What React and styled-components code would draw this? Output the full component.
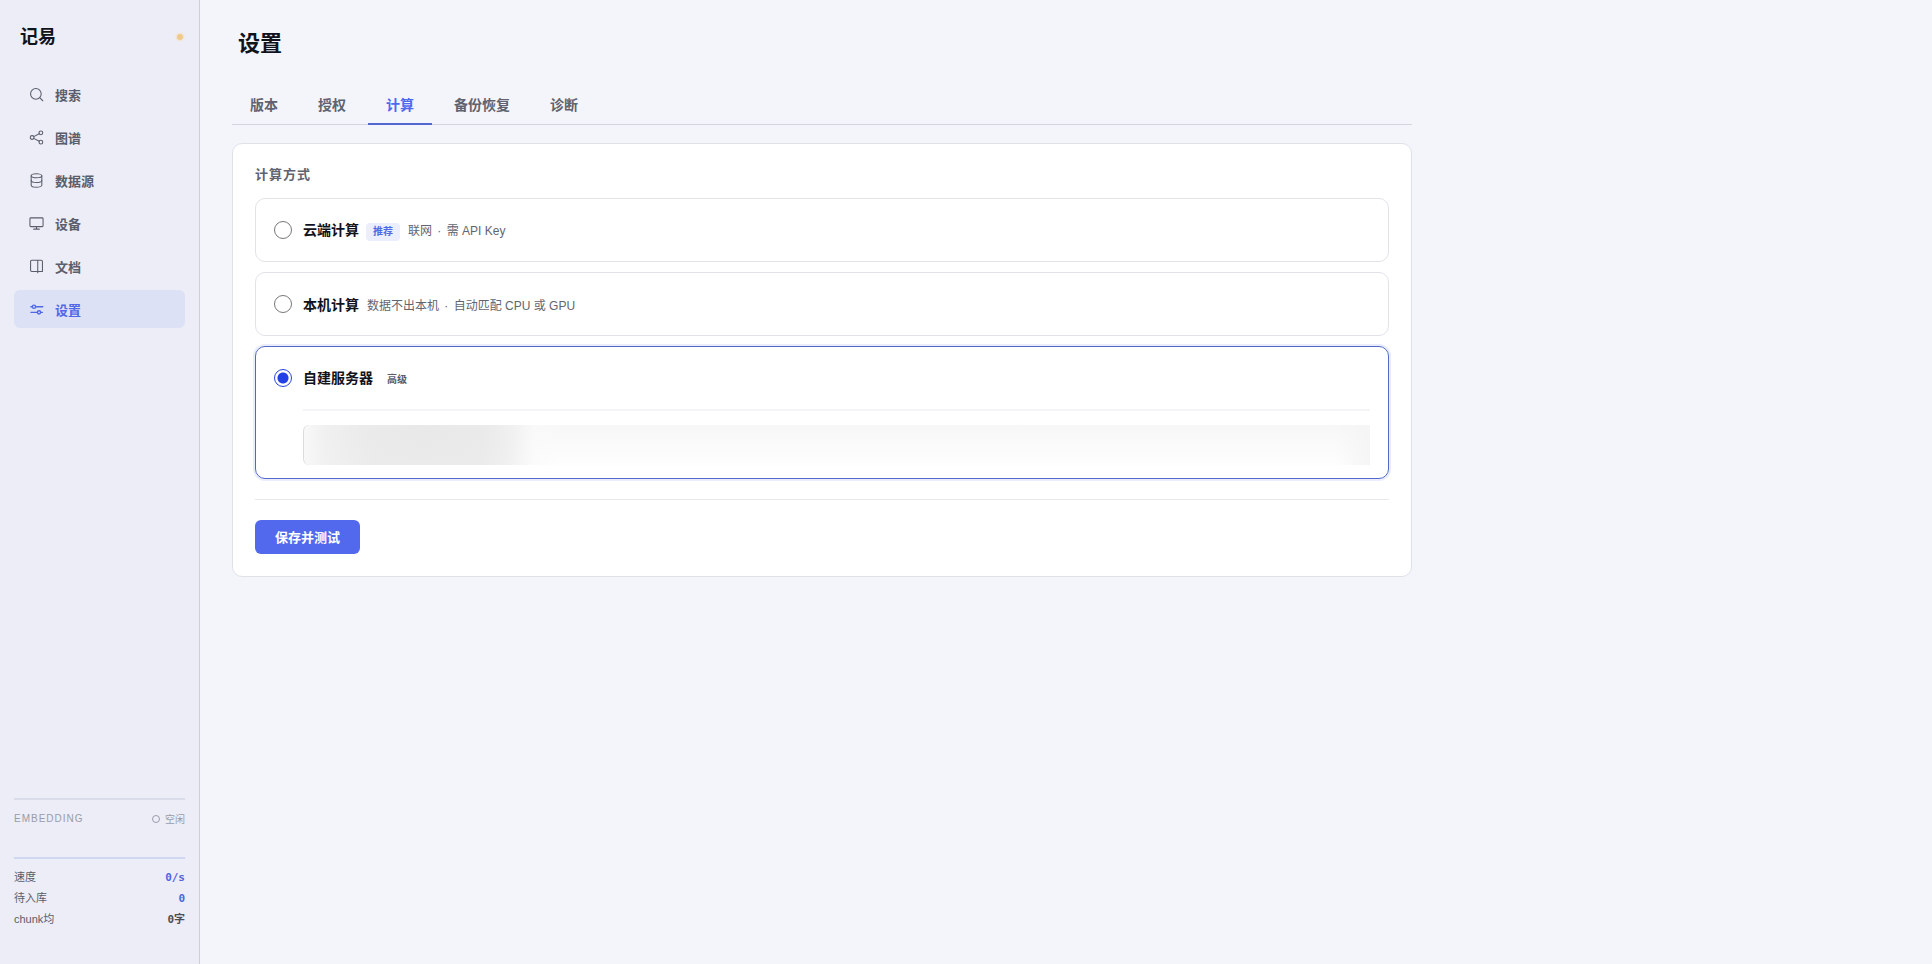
import React, { useState } from 'react'
import styled, { createGlobalStyle } from 'styled-components'

const GlobalStyle = createGlobalStyle`
    * {
        box-sizing: border-box;
    }

    body {
        margin: 0;
        background: #f4f5fb;
        color: #11131c;
        font-family: "Liberation Sans", "Noto Sans CJK SC", sans-serif;
        font-size: 13px;
    }

    button, input {
        font-family: inherit;
    }
`

const Page = styled.div`
    display: flex;
    min-height: 100vh;
`

const Sidebar = styled.aside`
    flex: none;
    display: flex;
    flex-direction: column;
    justify-content: space-between;
    width: 200px;
    padding: 22px 14px 34px;
    background: #ecedf6;
    border-right: 1px solid #ccced8;
`

const Brand = styled.div`
    display: flex;
    align-items: center;
    justify-content: space-between;
    padding-left: 6px;
    margin-bottom: 23px;
`

const BrandName = styled.span`
    font-size: 18px;
    font-weight: 700;
    line-height: 30px;
`

const ThemeButton = styled.button`
    display: flex;
    padding: 0;
    border: 0;
    background: none;
`

const Nav = styled.nav`
    display: flex;
    flex-direction: column;
    gap: 5px;
`

const NavLink = styled.a`
    display: flex;
    align-items: center;
    gap: 11px;
    height: 38px;
    padding: 0 15px;
    border-radius: 6px;
    background: ${props => props.$active ? '#dce1f5' : 'transparent'};
    color: ${props => props.$active ? '#5068e8' : '#5a5d6b'};
    font-weight: 600;
    text-decoration: none;
`

const Status = styled.div`
    display: flex;
    align-items: center;
    justify-content: space-between;
    height: 59px;
    padding-bottom: 20px;
    border-top: 2px solid #dadce9;
    color: #9a9ca8;
    font-size: 10px;
`

const StatusName = styled.span`
    letter-spacing: 1px;
`

const StatusState = styled.span`
    display: flex;
    align-items: center;
    gap: 5px;
`

const StatusRing = styled.i`
    width: 8px;
    height: 8px;
    border: 1px solid currentColor;
    border-radius: 50%;
`

const Stats = styled.dl`
    margin: 0;
    padding-top: 8px;
    border-top: 2px solid #d0d7f0;
`

const Stat = styled.div`
    display: flex;
    justify-content: space-between;
    font-size: 11px;
    line-height: 21px;
    color: #5a5d6b;
`

const StatValue = styled.dd`
    margin: 0;
    color: ${props => props.$accent ? '#4f66e0' : '#4c4e5a'};
    font-family: "DejaVu Sans Mono", "Noto Sans CJK SC", monospace;
    font-weight: 700;
`

const Main = styled.main`
    flex: 1;
    max-width: 1244px;
    padding: 28px 32px;
`

const PageTitle = styled.h1`
    margin: 0 0 26px;
    padding-left: 6px;
    font-size: 22px;
    font-weight: 700;
    line-height: 32px;
`

const Tabs = styled.div`
    display: flex;
    gap: 4px;
    margin-bottom: 18px;
    border-bottom: 1px solid #d3d5de;
`

const Tab = styled.button`
    height: 39px;
    margin-bottom: -1px;
    padding: 0 18px 2px;
    border: 0;
    border-bottom: 2px solid ${props => props.$active ? '#5068d0' : 'transparent'};
    background: none;
    color: ${props => props.$active ? '#5068ee' : '#5f626f'};
    font-size: 14px;
    font-weight: 600;
`

const Card = styled.form`
    padding: 22px;
    background: #fff;
    border: 1px solid #dfe1e9;
    border-radius: 10px;
`

const Options = styled.fieldset`
    display: flex;
    flex-direction: column;
    gap: 10px;
    margin: 0;
    padding: 0;
    border: 0;
`

const Legend = styled.legend`
    margin-bottom: 14px;
    padding: 0;
    color: #5f626f;
    font-weight: 600;
    letter-spacing: 1px;
    line-height: 18px;
`

const Option = styled.div`
    padding: 0 18px;
    border: 1px solid ${props => props.$active ? '#5468c8' : '#e2e3e8'};
    border-radius: 10px;
    box-shadow: ${props => props.$active ? '0 0 0 2px #e9edfd' : 'none'};
`

const OptionLabel = styled.label`
    display: flex;
    align-items: center;
    height: 62px;
`

const Radio = styled.input`
    appearance: none;
    width: 18px;
    height: 18px;
    margin: 0 11px 0 0;
    border: 1px solid #777;
    border-radius: 50%;

    &:checked {
        border-color: #2a45e0;
        background: radial-gradient(circle, #2340e6 5px, #fff 6px);
    }
`

const OptionText = styled.span`
    display: flex;
    align-items: baseline;
`

const OptionName = styled.span`
    font-size: 14px;
    font-weight: 700;
`

const Badge = styled.span`
    margin-left: 7px;
    padding: 0 7px;
    border-radius: 4px;
    background: ${props => props.$accent ? '#eaeefd' : 'transparent'};
    color: ${props => props.$accent ? '#5068e8' : '#5a5d6b'};
    font-size: 10px;
    font-weight: 600;
    line-height: 18px;
`

const OptionHint = styled.span`
    margin-left: 8px;
    color: #62656f;
    font-size: 12px;
`

const Dot = styled.span`
    margin: 0 2px;
`

const OptionBody = styled.div`
    margin-left: 29px;
    padding: 14px 0 13px;
    border-top: 2px solid #f4f4f6;
`

const ServerInput = styled.input`
    display: block;
    width: 100%;
    height: 40px;
    padding: 0 12px;
    border: 0;
    border-left: 1px solid #dcdcdf;
    border-radius: 6px 0 0 6px;
    background:
        linear-gradient(to left, #f5f5f5, rgba(255, 255, 255, 0) 36px),
        radial-gradient(110px 50px at 120px 8px, rgba(229, 230, 230, 0.6), rgba(229, 230, 230, 0)),
        linear-gradient(to right, #f8f8f8, #f1f1f1 20px, #ececec 70px, #ececec 180px, #f1f1f1 205px, rgba(250, 250, 250, 0.7) 230px, rgba(252, 252, 252, 0) 260px),
        linear-gradient(#f7f7f7, #fefefe);
`

const Actions = styled.div`
    margin-top: 20px;
    padding-top: 20px;
    border-top: 1px solid #e8e9ec;
`

const SaveButton = styled.button`
    display: block;
    height: 34px;
    padding: 0 20px 2px;
    border: 0;
    border-radius: 6px;
    background: #5269ee;
    color: #fff;
    font-size: 13px;
    font-weight: 600;
`

const Icon = ({ children }) => (
    <svg width="15" height="15" viewBox="0 0 24 24" fill="none" stroke="currentColor" strokeWidth="1.7" strokeLinecap="round" strokeLinejoin="round" aria-hidden="true">
        {children}
    </svg>
)

const navItems = [
    { name: '搜索', icon: <Icon><circle cx="11" cy="11" r="8.5" /><path d="M17.5 17.5 22 22" /></Icon> },
    { name: '图谱', icon: <Icon><circle cx="5" cy="12" r="3" /><circle cx="19" cy="4.5" r="3" /><circle cx="19" cy="19.5" r="3" /><path d="M7.6 10.6 16.4 6M7.6 13.4l8.8 4.6" /></Icon> },
    { name: '数据源', icon: <Icon><ellipse cx="12" cy="4.5" rx="8.5" ry="3.2" /><path d="M3.5 4.5v15c0 1.8 3.8 3.2 8.5 3.2s8.5-1.4 8.5-3.2v-15" /><path d="M3.5 12c0 1.8 3.8 3.2 8.5 3.2s8.5-1.4 8.5-3.2" /></Icon> },
    { name: '设备', icon: <Icon><rect x="1.5" y="3" width="21" height="14" rx="1.5" /><path d="M12 17v4M7.5 21h9" /></Icon> },
    { name: '文档', icon: <Icon><path d="M14 20H4.5A2 2 0 0 1 2.5 18V4a2 2 0 0 1 2-2H19.5a2 2 0 0 1 2 2V20H14zM14 2v20" /></Icon> },
    { name: '设置', icon: <Icon><g strokeWidth="2.2"><circle cx="8" cy="7.5" r="2.6" /><circle cx="16" cy="16.5" r="2.6" /><path d="M3 7.5h2.4M10.6 7.5H22M3 16.5h10.4M18.6 16.5H21.5" /></g></Icon> }
]

const tabs = ['版本', '授权', '计算', '备份恢复', '诊断']

const options = [
    { id: 'cloud', name: '云端计算', badge: '推荐', accent: true, hints: ['联网', '需 API Key'] },
    { id: 'local', name: '本机计算', hints: ['数据不出本机', '自动匹配 CPU 或 GPU'] },
    { id: 'server', name: '自建服务器', badge: '高级' }
]

function SunIcon () {
    return (
        <svg width="10" height="10" viewBox="0 0 20 20" aria-hidden="true">
            <circle cx="10" cy="10" r="7.5" fill="none" stroke="#f6dfbc" strokeWidth="3" strokeDasharray="3 2.9" />
            <circle cx="10" cy="10" r="6" fill="#f0c98a" />
        </svg>
    )
}

function AppSidebar () {
    return (
        <Sidebar>
            <div>
                <Brand>
                    <BrandName>记易</BrandName>
                    <ThemeButton type="button" aria-label="主题"><SunIcon /></ThemeButton>
                </Brand>
                <Nav>
                    {navItems.map(item => (
                        <NavLink key={item.name} href="#" $active={item.name === '设置'}>
                            {item.icon}
                            {item.name}
                        </NavLink>
                    ))}
                </Nav>
            </div>
            <div>
                <Status>
                    <StatusName>EMBEDDING</StatusName>
                    <StatusState><StatusRing />空闲</StatusState>
                </Status>
                <Stats>
                    <Stat><dt>速度</dt><StatValue $accent>0/s</StatValue></Stat>
                    <Stat><dt>待入库</dt><StatValue $accent>0</StatValue></Stat>
                    <Stat><dt>chunk均</dt><StatValue>0字</StatValue></Stat>
                </Stats>
            </div>
        </Sidebar>
    )
}

function App () {
    const [tab, setTab] = useState('计算')
    const [mode, setMode] = useState('server')

    return (
        <Page>
            <GlobalStyle />
            <AppSidebar />
            <Main>
                <PageTitle>设置</PageTitle>
                <Tabs role="tablist">
                    {tabs.map(name => (
                        <Tab key={name} type="button" role="tab" aria-selected={name === tab} $active={name === tab} onClick={() => setTab(name)}>{name}</Tab>
                    ))}
                </Tabs>
                <Card onSubmit={e => e.preventDefault()}>
                    <Options>
                        <Legend>计算方式</Legend>
                        {options.map(option => (
                            <Option key={option.id} $active={option.id === mode}>
                                <OptionLabel>
                                    <Radio type="radio" name="mode" checked={option.id === mode} onChange={() => setMode(option.id)} />
                                    <OptionText>
                                        <OptionName>{option.name}</OptionName>
                                        {option.badge && <Badge $accent={option.accent}>{option.badge}</Badge>}
                                        {option.hints && <OptionHint>{option.hints[0]} <Dot>·</Dot> {option.hints[1]}</OptionHint>}
                                    </OptionText>
                                </OptionLabel>
                                {option.id === 'server' && mode === 'server' && (
                                    <OptionBody>
                                        <ServerInput type="text" aria-label="自建服务器" />
                                    </OptionBody>
                                )}
                            </Option>
                        ))}
                    </Options>
                    <Actions>
                        <SaveButton type="submit">保存并测试</SaveButton>
                    </Actions>
                </Card>
            </Main>
        </Page>
    )
}

export default App
